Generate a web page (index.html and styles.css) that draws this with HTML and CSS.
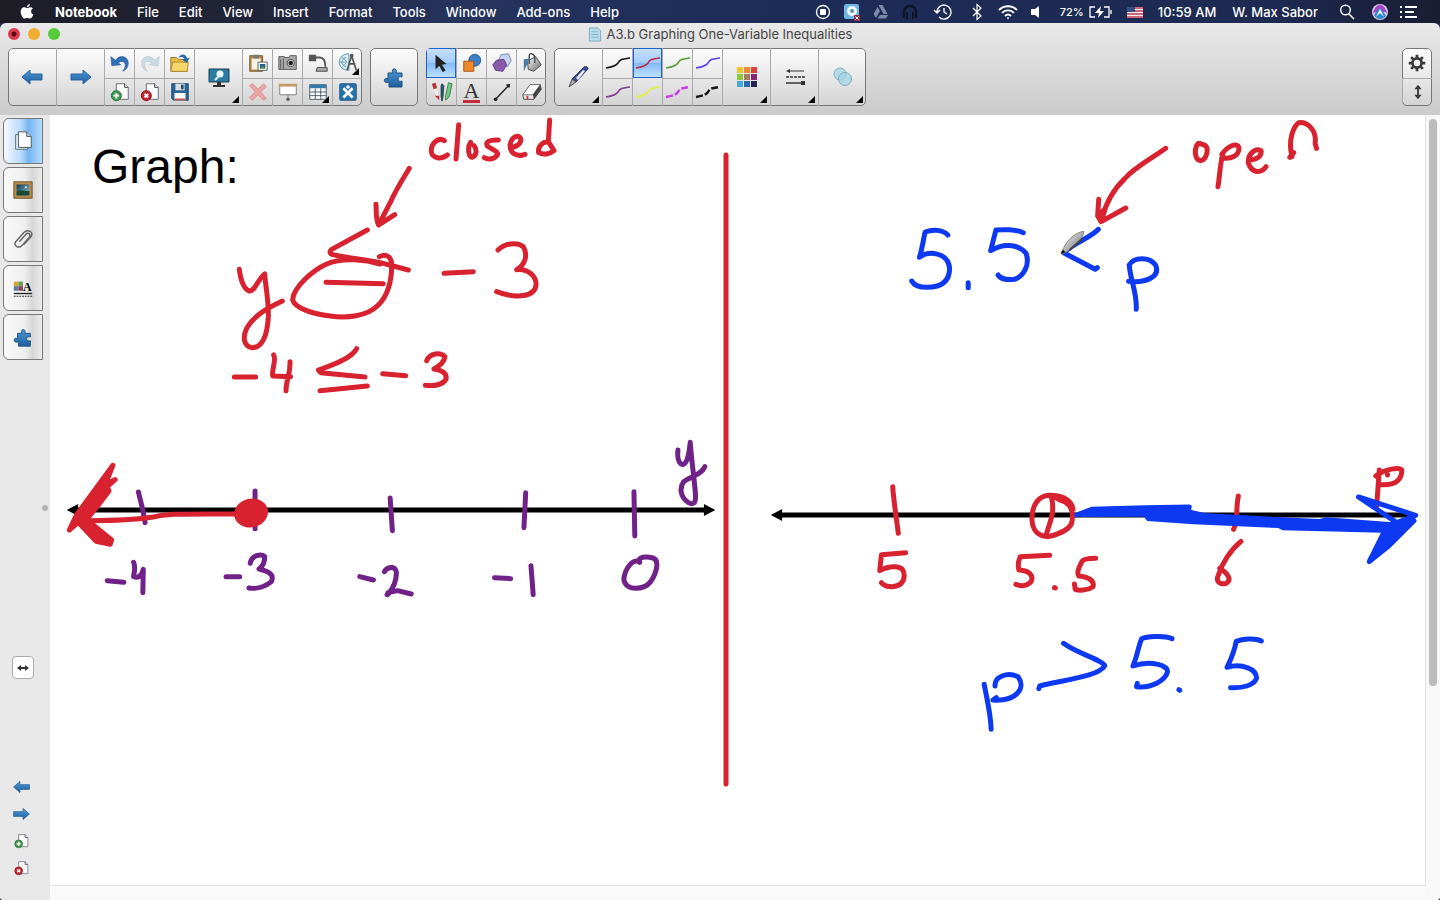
FILE: index.html
```html
<!DOCTYPE html>
<html lang="en">
<head>
<meta charset="utf-8">
<title>A3.b Graphing One-Variable Inequalities</title>
<link rel="stylesheet" href="styles.css">
</head>
<body>
<svg class="defs" aria-hidden="true">
  <defs>
    <linearGradient id="blue" x1="0" y1="0" x2="0" y2="1"><stop offset="0" stop-color="#4d9bd8"/><stop offset="1" stop-color="#1f5d9c"/></linearGradient>
    <linearGradient id="steel" x1="0" y1="0" x2="1" y2="1"><stop offset="0" stop-color="#fff"/><stop offset="1" stop-color="#666"/></linearGradient>
    <linearGradient id="sky" x1="0" y1="0" x2="1" y2="1"><stop offset="0" stop-color="#12384e"/><stop offset="1" stop-color="#8cc3dc"/></linearGradient>
    <symbol id="left" viewBox="0 0 24 20"><path d="M2 10 10 3v4h12v6H10v4z" fill="url(#blue)" stroke="#2b679f"/></symbol>
    <symbol id="right" viewBox="0 0 24 20"><path d="M22 10 14 3v4H2v6h12v4z" fill="url(#blue)" stroke="#2b679f"/></symbol>
    <symbol id="puzzle" viewBox="0 0 24 24"><path d="M6 8h5c-3-5 5-6 3 0h6v4c-2-1-4 0-4 2s2 3 4 2v6H7v-5c-6 3-6-6-1-3z" fill="url(#blue)" stroke="#204f80"/></symbol>
    <symbol id="page-add" viewBox="0 0 24 24"><path d="M8 3h9l4 4v13H8z" fill="#fafafa" stroke="#667"/><path d="M17 3v4h4" fill="#ddd" stroke="#445"/><circle cx="8" cy="16" r="5.500" fill="#3f994b" stroke="#276e35"/><path d="M8 13v6M5 16h6" stroke="#fff" stroke-width="2"/></symbol>
    <symbol id="page-del" viewBox="0 0 24 24"><path d="M8 3h9l4 4v13H8z" fill="#fafafa" stroke="#667"/><path d="M17 3v4h4" fill="#ddd" stroke="#445"/><circle cx="8" cy="16" r="5.500" fill="#c2242c" stroke="#851820"/><path d="m6 14 4 4m0-4-4 4" stroke="#fff" stroke-width="2"/></symbol>
    <symbol id="curve" viewBox="0 0 26 20"><path d="M1 15c6-1 10-2 12-5 2-4 5-4 12-5" fill="none" stroke="currentColor" stroke-width="1.600"/></symbol>
    <symbol id="curve-dash" viewBox="0 0 26 20"><path d="M1 15c6-1 10-2 12-5 2-4 5-4 12-5" fill="none" stroke="currentColor" stroke-width="2.400" stroke-dasharray="7 2"/></symbol>
  </defs>
</svg>

<header class="menubar">
  <nav class="menus" aria-label="Application menu">
    <button class="apple" aria-label="Apple menu"><svg viewBox="0 0 16 18"><path d="M11 1c0 2-1.500 3.500-3.200 3.500C7.700 2.800 9 1.300 11 1zM8.200 5.300c.8 0 1.800-.9 3.300-.9 1 0 2 .5 2.700 1.500-2.800 1.700-2.200 5.200.5 6.300-.8 2.200-2 4.300-3.500 4.300-1.100 0-1.500-.7-2.800-.7s-1.800.7-2.800.7c-2 0-4.300-4-4.300-7.200C1.300 6.300 3 4.500 5 4.500c1.400 0 2.400.8 3.200.8z" fill="#fff"/></svg></button>
    <button class="app">Notebook</button><button>File</button><button>Edit</button><button>View</button><button>Insert</button><button>Format</button><button>Tools</button><button>Window</button><button>Add-ons</button><button>Help</button>
  </nav>
  <div class="status">
    <svg viewBox="0 0 18 18"><circle cx="9" cy="9" r="6.500" fill="none" stroke="#fff" stroke-width="1.300"/><rect x="6" y="6" width="6" height="6" rx="1" fill="#fff"/></svg>
    <svg viewBox="0 0 18 18"><rect x="1" y="1" width="15" height="15" rx="2" fill="#72b7e2"/><circle cx="9" cy="8" r="5" fill="#eef8ff"/><circle cx="9" cy="8" r="2" fill="#5a91b8"/><rect x="11" y="12" width="6" height="6" fill="#96304c"/><path d="m12.500 13.500 3 3m0-3-3 3" stroke="#fff"/></svg>
    <svg viewBox="0 0 18 18"><path d="M6.500 2h4l5 9h-4zM5.500 4 8 8l-4 7-2.500-4zM8 12h8l-2 3.500H5.500z" fill="#7e88a7"/></svg>
    <svg viewBox="0 0 18 18"><path d="M3 15V9C3 1 15 1 15 9v6" fill="none" stroke="#101525" stroke-width="2.500"/><path d="M5 9h2v7H5zM11 9h2v7h-2z" fill="#101525"/></svg>
    <svg class="clock" viewBox="0 0 20 18"><path d="M4 9a7 7 0 1 1 2 5M1 7l3 3 3-3M11 5v4l3 2" fill="none" stroke="#fff" stroke-width="1.400"/></svg>
    <svg class="bt" viewBox="0 0 18 18"><path d="m5 5 8 8-4 3.500v-15L13 5l-8 8" fill="none" stroke="#fff" stroke-width="1.200"/></svg>
    <svg class="wifi" viewBox="0 0 20 18"><path d="M1 7c5-5 13-5 18 0M4 10c3-3.500 9-3.500 12 0M7 13c2-2 4-2 6 0" fill="none" stroke="#fff" stroke-width="1.900"/><path d="m8.500 14.500 1.500 2 1.500-2z" fill="#fff"/></svg>
    <svg class="vol" viewBox="0 0 18 18"><path d="M4 6h4l4-3v12l-4-3H4z" fill="#fff"/></svg>
    <span class="pct">72%</span>
    <svg class="batt" viewBox="0 0 25 18"><path d="M7 4H2v10h5M16 4h5v10h-5M23 7v4" fill="none" stroke="#fff" stroke-width="1.300"/><path d="M13 3 7 10h4l-1 5 6-7h-4z" fill="#fff"/></svg>
    <svg class="flag" viewBox="0 0 18 18"><path fill="#eee" d="M1 4h16v11H1z"/><path d="M1 5h16M1 8h16M1 11h16M1 14h16" stroke="#c23b52" stroke-width="1.500"/><path fill="#394f85" d="M1 4h8v5H1z"/></svg>
    <span class="time">10:59 AM</span><span class="user">W. Max Sabor</span>
    <svg class="search" viewBox="0 0 18 18"><circle cx="7.500" cy="7" r="4.800" fill="none" stroke="#fff" stroke-width="1.400"/><path d="m11 11 5 5" stroke="#fff" stroke-width="1.500"/></svg>
    <svg class="siri" viewBox="0 0 18 18"><circle cx="9" cy="9" r="8" fill="#d8c8ef"/><path d="M2 10c3-11 11-11 14 0-4-2-9-2-14 0z" fill="#a945c5"/><path d="M3 12c3-4 4-6 6-7 2 1 3 4 6 8-4 4-9 4-12-1z" fill="#2a8ac9"/><path d="m5 14 4-8 4 8-4-4z" fill="#f3fbff"/></svg>
    <svg class="list" viewBox="0 0 18 18"><path d="M0 4h2M5 4h12M0 9h2M5 9h9M0 14h2M5 14h12" stroke="#fff" stroke-width="2"/></svg>
  </div>
</header>

<div class="window">
  <div class="titlebar">
    <div class="lights"><button class="close" aria-label="Close"></button><button class="min" aria-label="Minimize"></button><button class="max" aria-label="Zoom"></button></div>
    <h1><svg viewBox="0 0 14 16"><path d="M1 1h9l3 3v11H1z" fill="#b9dcec" stroke="#7fa8bd"/><path d="M3 5h7M3 8h8M3 11h8" stroke="#7fb4cf"/></svg>A3.b Graphing One-Variable Inequalities</h1>
    <div></div>
  </div>

  <div class="toolbar" role="toolbar" aria-label="Tools">
    <div class="group">
      <button class="big" aria-label="Previous page"><svg><use href="#left"/></svg></button>
      <button class="big" aria-label="Next page"><svg><use href="#right"/></svg></button>
      <button aria-label="Undo"><svg viewBox="0 0 24 24"><path d="M7 9c5-7 14-4 14 3 0 5-3 8-6 9 3-4 4-8 1-10-2-1.500-4-.5-6 1l3 2-10 1-1-10z" fill="#2f70b7" stroke="#20558f" stroke-width=".6"/></svg></button>
      <button aria-label="Add page"><svg><use href="#page-add"/></svg></button>
      <button aria-label="Redo"><svg viewBox="0 0 24 24"><path d="M17 9C12 2 3 5 3 12c0 5 3 8 6 9-3-4-4-8-1-10 2-1.500 4-.5 6 1l-3 2 10 1 1-10z" fill="#ccdae2" stroke="#aebfc9" stroke-width=".6"/></svg></button>
      <button aria-label="Delete page"><svg><use href="#page-del"/></svg></button>
      <button aria-label="Open"><svg viewBox="0 0 24 24"><path d="M2 6h6l2 2h10v13H2z" fill="#e9bd42" stroke="#94702a"/><path d="m2 21 2-10h17l-1 10z" fill="#f5d66b" stroke="#aa8331"/><path d="M10 6c4-5 8-4 10 1l3-1-4 6-5-4h3c-1-3-3-3-7-2z" fill="#296ba8"/></svg></button>
      <button aria-label="Save"><svg viewBox="0 0 24 24"><path d="M3 3h18v18H5l-2-2z" fill="#28669a" stroke="#1b4668"/><path d="M7 3h10v7H7z" fill="#ddd"/><path d="M13 4h3v5h-3z" fill="#245070"/><path d="M6 13h12v8H6z" fill="#fff"/><path d="M6 19h12v2H6z" fill="#c75249"/></svg></button>
      <button class="big more" aria-label="View screens"><svg viewBox="0 0 24 24"><path d="M2 4h20v13H2z" fill="#2b7ba5" stroke="#1d4053"/><path d="M10 17h4v3h4v2H6v-2h4z" fill="#333"/><circle cx="13" cy="9" r="3.500" fill="#e9f8ff"/><path d="m11 12-3 3" stroke="#fff" stroke-width="2"/></svg></button>
      <button aria-label="Paste"><svg viewBox="0 0 24 24"><path d="M3 4h14v17H3z" fill="#b98744" stroke="#6d542f"/><path d="M5 7h10v12H5z" fill="#f5f2e8"/><path d="M7 3h6v4H7z" fill="#777"/><path d="M12 11h10v9H12z" fill="#fff" stroke="#555"/><path d="M14 13h6v5h-6z" fill="#27618b"/><path d="m14 18 3-3 3 3z" fill="#549249"/></svg></button>
      <button aria-label="Delete"><svg viewBox="0 0 24 24"><path d="m3 5 3-2 6 6 6-6 3 3-6 6 6 7-3 2-6-6-6 6-3-3 6-6z" fill="#e8a6a6" stroke="#dc8e90"/></svg></button>
      <button aria-label="Screen capture"><svg viewBox="0 0 24 24"><path d="M2 5h6v1h5l1-2h7v15H2z" fill="#aaa" stroke="#555"/><path d="M4 8v10M7 7v12" stroke="#555"/><circle cx="15" cy="12" r="4" fill="#ddd" stroke="#444"/><circle cx="15" cy="12" r="2.500" fill="#222"/></svg></button>
      <button aria-label="Screen shade"><svg viewBox="0 0 24 24"><path d="M3 5h18v10H3z" fill="#fff" stroke="#777"/><path d="M2 3h20v3H2z" fill="#c49a68"/><path d="M12 15v4" stroke="#777"/><circle cx="12" cy="20" r="2" fill="#666"/></svg></button>
      <button aria-label="Document camera"><svg viewBox="0 0 24 24"><path d="M2 3h8v7H2z" fill="#555"/><path d="M9 6h5c4 0 6 4 6 10" fill="none" stroke="#555" stroke-width="2"/><path d="M11 17h11v4H10z" fill="#aaa" stroke="#444"/></svg></button>
      <button class="more" aria-label="Table"><svg viewBox="0 0 24 24"><path d="M3 4h18v16H3z" fill="#fff" stroke="#465565"/><path d="M3 4h18v4H3z" fill="#357cad"/><path d="M3 12h18M3 16h18M9 8v12M15 8v12" stroke="#465565"/></svg></button>
      <button class="more" aria-label="Measurement tools"><svg viewBox="0 0 24 24"><path d="M13 2C-1 2-1 20 13 20zM10 6C4 7 4 15 10 16" fill="#d9edf3" stroke="#558b9d"/><path d="M2 11h8M5 5l6 6M5 17l6-6" stroke="#6c9cab"/><path d="m16 4-5 16M16 4l5 16M13 13h7" fill="none" stroke="#555" stroke-width="1.800"/><circle cx="16" cy="4" r="2" fill="#555"/></svg></button>
      <button aria-label="Activity builder"><svg viewBox="0 0 24 24"><rect x="3" y="3" width="18" height="18" rx="1" fill="#2472ae" stroke="#1f5783"/><path d="m7 8 10 10m0-10L7 18" stroke="#fff" stroke-width="3"/><circle cx="12" cy="6.500" r="2" fill="#fff"/></svg></button>
    </div>
    <div class="group">
      <button class="big" aria-label="Add-ons"><svg><use href="#puzzle"/></svg></button>
    </div>
    <div class="group">
      <button class="on" aria-label="Select" aria-pressed="true"><svg viewBox="0 0 24 24"><path d="m6 3 12 10-5 1 4 6-3 2-4-7-4 4z" fill="#222"/></svg></button>
      <button aria-label="Pens"><svg viewBox="0 0 24 24"><path d="m1 3 4-1 4 14v5l-4-4z" fill="#b6333c"/><path d="m2 9 5-1 2 8H5z" fill="#eee"/><path d="m12 3 2 2-1 13-1 4-1-5V5z" fill="#245b78" stroke="#254050"/><path d="m19 2 4 1-3 14-4 4v-5z" fill="#7bc488" stroke="#2b8740"/></svg></button>
      <button aria-label="Shapes"><svg viewBox="0 0 24 24"><circle cx="15" cy="9" r="6.500" fill="#3d7fc2" stroke="#28598e"/><path d="M3 10h11v11H3z" fill="#ee892c" stroke="#a75214"/></svg></button>
      <button class="text-tool" aria-label="Text"><span>A</span></button>
      <button aria-label="Regular polygons"><svg viewBox="0 0 24 24"><path d="m11 3 8-1 3 7-4 7-8-1-2-6z" fill="#c8d5f4" stroke="#717eb3"/><path d="m6 9 8-1 3 6-4 7-8-1-3-6z" fill="#8a5bad" stroke="#593978"/></svg></button>
      <button aria-label="Line"><svg viewBox="0 0 24 24"><path d="M5 20 20 4" stroke="#222" stroke-width="1.500"/><path d="m16 4 5-1-1 5z" fill="#222"/><circle cx="5" cy="20" r="2" fill="#222"/></svg></button>
      <button aria-label="Fill"><svg viewBox="0 0 24 24"><path d="m7 10 9-5 6 9-8 7-6-2z" fill="url(#steel)" stroke="#444"/><path d="M9 13V4c0-4 6-2 6 2v6" fill="none" stroke="#444" stroke-width="1.500"/><path d="m10 7-7 1v13l4-8z" fill="#4b7ea6"/></svg></button>
      <button aria-label="Eraser"><svg viewBox="0 0 24 24"><path d="M10 4h11l1 5-8 11H3l-1-5z" fill="#e8e8e8" stroke="#444"/><path d="m2 15 8-11h11l-8 11z" fill="#fff" stroke="#777"/><path d="m13 15 1 5 8-11-1-5z" fill="#444"/><path d="M6 16h2v4H6z" fill="#d12f42"/></svg></button>
    </div>
    <div class="group">
      <button class="big more" aria-label="Pen type"><svg viewBox="0 0 24 24"><path d="M18 2c2-1 4 0 4 2L10 17l-4-3z" fill="#394c97" stroke="#333d6a"/><path d="m17 5 2 1-7 9-2-2z" fill="#eee"/><path d="m6 14 4 3-7 5z" fill="#aaa" stroke="#555"/></svg></button>
      <button class="ink-black" aria-label="Black pen"><svg class="wide"><use href="#curve"/></svg></button>
      <button class="ink-violet" aria-label="Purple pen"><svg class="wide"><use href="#curve"/></svg></button>
      <button class="on ink-red" aria-label="Red pen" aria-pressed="true"><svg class="wide"><use href="#curve"/></svg></button>
      <button class="ink-yellow" aria-label="Yellow highlighter"><svg class="wide"><use href="#curve"/></svg></button>
      <button class="ink-green" aria-label="Green pen"><svg class="wide"><use href="#curve"/></svg></button>
      <button class="ink-pink" aria-label="Magenta dashed pen"><svg class="wide"><use href="#curve-dash"/></svg></button>
      <button class="ink-blue" aria-label="Blue pen"><svg class="wide"><use href="#curve"/></svg></button>
      <button class="ink-black" aria-label="Black dashed pen"><svg class="wide"><use href="#curve-dash"/></svg></button>
      <button class="big more" aria-label="Color"><svg viewBox="0 0 24 24"><path fill="#efc433" d="M2 2h6v6H2z"/><path fill="#ec8b2f" d="M9 2h6v6H9z"/><path fill="#dc4233" d="M16 2h6v6h-6z"/><path fill="#8cc83d" d="M2 9h6v6H2z"/><path fill="#a97960" d="M9 9h6v6H9z"/><path fill="#862676" d="M16 9h6v6h-6z"/><path fill="#49a9df" d="M2 16h6v6H2z"/><path fill="#2d67ac" d="M9 16h6v6H9z"/><path fill="#24245b" d="M16 16h6v6h-6z"/></svg></button>
      <button class="big more" aria-label="Line style"><svg viewBox="0 0 24 24"><path d="M5 6h16" stroke="#333"/><path d="M3 6l4-2v4zM18 16h4v4h-4z" fill="#333"/><path d="M3 12h19" stroke="#333" stroke-width="1.500" stroke-dasharray="3 1"/><path d="M3 18h18" stroke="#333" stroke-width="1.500"/></svg></button>
      <button class="big more" aria-label="Transparency"><svg viewBox="0 0 24 24"><circle cx="9" cy="9" r="6" fill="#b5dbe8" stroke="#7eacbc"/><circle cx="14" cy="14" r="6.500" fill="#a3d4e5" fill-opacity=".75" stroke="#7eacbc"/></svg></button>
    </div>
    <div class="group end">
      <button aria-label="Customize toolbar"><svg viewBox="0 0 24 24"><circle cx="12" cy="12" r="5" fill="none" stroke="#3b3b3b" stroke-width="3"/><path d="M12 3v4M12 17v4M3 12h4M17 12h4M5.600 5.600l3 3M15.400 15.400l3 3M5.600 18.400l3-3M15.400 8.600l3-3" stroke="#3b3b3b" stroke-width="3"/></svg></button>
      <button aria-label="Move toolbar"><svg viewBox="0 0 24 24"><path d="m12 4 4 5h-3v6h3l-4 5-4-5h3V9H8z" fill="#3b3b3b"/></svg></button>
    </div>
  </div>

  <main class="workspace">
    <aside class="sidebar">
      <div class="tabs">
        <button class="active" aria-label="Page sorter"><svg viewBox="0 0 24 24"><path d="M4 5h10l3 3v13H4z" fill="#e4f1ff" stroke="#566"/><path d="M7 2h9l5 5v12H7z" fill="#fafdff" stroke="#455"/><path d="M16 2v5h5" fill="#ccd" stroke="#455"/></svg></button>
        <button aria-label="Gallery"><svg viewBox="0 0 24 24"><path d="M2 3h20v18H2z" fill="#b58a45" stroke="#70522c"/><path d="M5 6h14v12H5z" fill="url(#sky)"/><path d="M5 14c5-4 9 0 14-1v5H5z" fill="#1d4a36"/><circle cx="15" cy="9" r="1" fill="#fff"/></svg></button>
        <button aria-label="Attachments"><svg viewBox="0 0 24 24"><path d="m8 15 7-8c3-3 6 0 4 3l-8 9c-4 4-10 0-7-4l9-10c4-4 11-1 8 4l-8 9" fill="none" stroke="#666" stroke-width="1.600"/></svg></button>
        <button aria-label="Properties"><svg viewBox="0 0 24 24"><path fill="#d3a63c" d="M2 5h5v5H2z"/><path fill="#67a05a" d="M7 5h5v5H7z"/><path fill="#5b7d9c" d="M2 10h5v5H2z"/><path fill="#8b445e" d="M7 10h5v5H7z"/><path d="M2 18h20" stroke="#222" stroke-width="1.500"/><path d="M2 21h20" stroke="#222" stroke-dasharray="2 1"/><text x="12" y="15" class="icon-letter">A</text></svg></button>
        <button aria-label="Add-ons tab"><svg><use href="#puzzle"/></svg></button>
      </div>
      <div class="grip"></div>
      <button class="resize" aria-label="Move sidebar"><svg viewBox="0 0 16 16"><path d="m2 8 4-3v2h4V5l4 3-4 3V9H6v2z" fill="#333"/></svg></button>
      <div class="pager">
        <button aria-label="Back"><svg><use href="#left"/></svg></button>
        <button aria-label="Forward"><svg><use href="#right"/></svg></button>
        <button aria-label="New page"><svg><use href="#page-add"/></svg></button>
        <button aria-label="Remove page"><svg><use href="#page-del"/></svg></button>
      </div>
    </aside>
    <section class="canvas" aria-label="Notebook page">
      <svg class="board" viewBox="50 115 1375 770" preserveAspectRatio="xMinYMin meet">
        <text x="92" y="183" class="heading">Graph:</text>
        <path class="red divider" d="M726 155V784"/>
        <g class="red" transform="translate(50 110) scale(.33333)" role="img" aria-label="closed; y ≤ −3; −4 ≤ −3">
          <path d="M1183 92C1165 80 1142 100 1144 125 1146 145 1175 150 1192 135M1226 44 1218 147M1262 97C1252 110 1255 140 1266 142 1280 138 1282 118 1272 107M1345 90C1320 88 1305 95 1312 108 1325 118 1348 125 1342 135 1332 148 1315 150 1303 143M1382 112C1400 112 1415 100 1412 85 1405 72 1385 80 1380 105 1380 130 1400 142 1425 133M1499 30 1495 95 1512 122M1495 97C1480 92 1462 110 1466 128 1480 136 1500 132 1512 122"/>
          <path d="M1078 175C1060 205 1040 235 1022 275L986 345M978 283C980 310 976 325 986 345L1034 314"/>
          <path d="M952 360 845 418C838 425 838 430 848 434 900 445 960 450 1000 460L1075 480M988 440C1010 430 1025 440 1025 465 1025 520 1010 560 985 585 950 620 890 625 840 618 790 612 735 595 728 570 730 530 790 480 830 462 880 440 950 450 990 462M828 517 1000 521"/>
          <path d="M568 478C572 510 580 535 597 543 615 545 625 505 644 492 648 540 656 570 655 620 652 680 635 715 605 713 580 708 578 680 590 655 610 620 640 600 697 573M1182 490 1270 485M1344 420C1365 400 1400 395 1420 410 1435 435 1425 465 1400 479 1435 475 1460 500 1458 525 1455 560 1400 568 1340 545"/>
          <path d="M553 801H617M671 735C680 750 665 775 668 798L722 800M720 755C722 790 708 810 708 842M920 716C905 745 850 765 805 780L812 788 945 801M810 842 952 828M998 791 1067 797M1130 752C1140 730 1170 725 1185 740 1182 760 1165 770 1152 777 1175 780 1192 790 1188 808 1175 828 1150 828 1126 826"/>
        </g>
        <g transform="translate(50 430) scale(.44005 .33333)" role="img" aria-label="Number line y from −4 to 0, shaded left from −3">
          <path class="axis" d="M55 240H1492"/><path d="M38 240 64 222V258zM1512 240 1486 222V258z"/>
          <path class="purple" d="M201 186C206 215 213 245 216 278M466 183V296M773 204 778 302M1081 188 1077 293M1327 185 1329 318M1427 60C1425 85 1428 100 1438 104 1450 100 1453 60 1455 37 1458 100 1466 160 1467 200 1467 222 1460 225 1450 217 1432 200 1430 175 1440 155 1455 140 1480 135 1488 110M130 452 168 457M190 397C196 415 190 430 190 440 200 445 208 440 212 418L211 488M400 440H431M455 400C458 375 480 370 488 380 488 400 480 412 475 417 500 425 510 435 503 455 490 470 470 478 452 474M704 440 735 450M760 425C765 412 785 405 787 425 788 455 780 475 768 493M768 488 790 482 821 492M766 494 770 490M1010 443 1047 446M1093 407 1098 494M1340 397C1325 380 1305 420 1304 450 1310 485 1350 480 1365 455 1380 425 1385 390 1370 384 1355 378 1335 380 1340 395"/>
          <path class="red" d="M90 272C160 272 200 268 230 262 270 250 290 252 430 252"/>
          <ellipse class="redfill" cx="457" cy="249" rx="38" ry="44" transform="rotate(15 457 249)"/>
          <path class="redfill red" d="M143 106 60 255 44 300 64 277 105 334 137 343 140 330 92 278 87 262 110 225 134 183 130 170 148 149 126 162z"/>
        </g>
        <g transform="translate(760 450) scale(.43367 .33333)" role="img" aria-label="Number line p from 5 to 6, shaded right from 5.5; p &gt; 5.5">
          <path class="axis" d="M45 195H1490"/><path d="M25 195 51 177V213zM1512 195 1486 180V210z"/>
          <path class="red" d="M306 110C308 150 314 200 319 250M1103 138C1097 175 1102 215 1092 238M722 178C718 150 697 135 666 136 640 138 627 170 627 205 627 245 645 260 665 260 690 252 710 242 718 222 725 190 718 160 695 152L680 142M672 142C682 190 665 225 660 255M336 308 280 314 276 362C300 345 330 345 332 370 335 400 320 408 305 410 290 410 284 405 280 398M668 316 600 320C595 335 595 350 597 360 620 362 632 375 625 395 615 410 600 408 590 403M679 413 681 414M774 325C755 325 745 328 742 335 735 355 730 365 735 378 755 380 772 390 768 410 755 422 735 422 727 418L725 402M1109 274C1085 300 1065 340 1057 375 1050 395 1060 405 1075 400 1088 390 1080 370 1060 355M1428 60 1422 170M1420 78C1440 57 1475 50 1480 60 1480 85 1470 108 1430 104M1447 73V75"/>
          <path class="blue" d="M730 195 765 178 890 173 990 171M1465 215 1380 141 1512 196 1460 222M1508 212 1448 290 1405 335 1440 243"/>
          <path class="bluefill" d="M728 190 765 172 990 165 995 180 1025 189 1200 202 1290 207 1305 202 1450 216 1508 208 1448 290 1400 332 1435 248 1205 241 1195 234 1000 223 893 213 885 200 740 201z"/>
          <path class="blue" d="M517 703C522 740 532 790 533 838M542 708C540 680 570 665 595 680 615 715 590 755 537 750L545 743M700 580C730 610 790 630 795 647 780 680 700 690 645 708L643 716M950 566C930 555 890 560 880 566 872 590 870 620 860 648 900 630 940 645 940 665 935 690 905 715 868 710L870 700M966 719 968 721M1156 573C1140 562 1110 568 1098 574 1095 600 1085 630 1077 652 1110 640 1145 655 1145 685 1140 705 1115 715 1085 713"/>
        </g>
        <g transform="translate(890 110) scale(.35077 .33333)" role="img" aria-label="open; 5.5 &lt; p">
          <path class="red" d="M786 115C740 150 700 170 670 205 635 240 615 280 605 325M595 268 592 318 602 335 672 294M592 318 610 300M878 101C867 115 867 148 885 152 903 150 910 115 898 106 890 103 884 99 878 101M948 135C940 170 940 200 935 230M946 133C965 105 990 97 995 113 995 140 970 147 950 144M1022 150C1045 150 1060 140 1058 122 1040 112 1018 135 1022 160 1030 185 1055 195 1072 170M1146 140C1134 90 1150 50 1165 38 1190 35 1217 60 1212 100L1216 115M1140 142 1151 128"/>
          <path class="blue" d="M165 375C150 358 120 358 100 366 95 390 92 415 84 442 110 422 165 425 170 475 170 520 140 532 105 532 80 532 68 525 62 513M223 518V533M380 368C360 358 320 358 302 360L287 422C320 400 365 400 388 430 400 465 380 500 355 508 335 510 318 510 308 495M594 358C570 385 530 395 495 428L585 478 591 473M682 465C685 510 705 550 702 598M682 465C695 440 740 440 757 465 772 500 730 520 680 514"/>
          <path d="M489 431C498 395 525 368 552 364 555 380 530 405 500 428z" fill="url(#steel)" stroke="#888" stroke-width="1"/><path d="m487 432 6-13 7 8z"/><path d="m512 420 36-34" stroke="#444" stroke-width="2"/>
        </g>
      </svg>
    </section>
    <div class="scroll"><div class="thumb"></div></div>
  </main>
</div>
</body>
</html>
```
FILE: styles.css
```css
* { box-sizing: border-box; }
body {
  margin: 0;
  height: 100vh;
  display: flex;
  flex-direction: column;
  overflow: hidden;
  background: #1d2748;
  font-family: Inter, "Liberation Sans", sans-serif;
}
button {
  margin: 0;
  padding: 0;
  border: 0;
  background: none;
  color: inherit;
  font: inherit;
}
.defs { position: absolute; width: 0; height: 0; }

.menubar {
  flex: none;
  height: 23px;
  display: flex;
  justify-content: space-between;
  align-items: center;
  padding: 0 22px 0 19px;
  color: #fff;
  font-size: 13px;
  font-weight: 500;
  white-space: nowrap;
  background: linear-gradient(90deg, #1e1d26, #22253a 18%, #26345e 32%, #1d2c58 50%, #1d2a52 88%, #1a1d33);
}
.menus, .status { display: flex; align-items: center; }
.menus { gap: 20px; }
.apple svg { display: block; width: 16px; height: 17px; }
.app { font-weight: 700; }
.status svg { width: 18px; height: 18px; margin-right: 11px; }
.status .clock { width: 20px; margin: 0 15px 0 3px; }
.status .bt { margin-right: 12px; }
.status .wifi { width: 20px; margin-right: 9px; }
.status .vol { margin-right: 15px; }
.pct { font-size: 11px; margin-right: 4px; }
.status .batt { width: 25px; margin-right: 13px; }
.status .flag { margin-right: 14px; }
.time { margin-right: 16px; }
.user { margin-right: 20px; }
.status .search { margin-right: 15px; }
.status .siri { margin-right: 11px; }
.status .list { margin-right: 0; }

.window {
  flex: 1;
  min-height: 0;
  display: flex;
  flex-direction: column;
  border-radius: 6px 6px 4px 4px;
  overflow: hidden;
  background: linear-gradient(#e9e9e9, #cbcbcb 92px);
}
.titlebar {
  flex: none;
  height: 22px;
  display: grid;
  grid-template-columns: 1fr auto 1fr;
  align-items: center;
  padding: 0 8px;
}
.lights { display: flex; gap: 8px; }
.lights button { width: 12px; height: 12px; border-radius: 50%; }
.close { background: radial-gradient(circle, #5a0712 0 2px, #df3b50 3px); }
.min { background: #f0ad32; }
.max { background: #55cb3b; }
h1 {
  display: flex;
  align-items: center;
  gap: 5px;
  margin: 0;
  color: #444;
  font-size: 13px;
  font-weight: 400;
  line-height: 20px;
}
h1 svg { width: 14px; height: 15px; }

.toolbar {
  flex: none;
  display: flex;
  gap: 8px;
  padding: 3px 8px 9px;
}
.group {
  display: grid;
  grid-template-rows: 30px 28px;
  grid-auto-flow: column;
  overflow: hidden;
  border-radius: 5px;
  outline: 1px solid #777;
  outline-offset: -1px;
  background: linear-gradient(#fdfdfd, #d3d3d3);
}
.group.end { margin-left: auto; }
.group button {
  position: relative;
  width: 30px;
  display: grid;
  place-items: center;
  border-left: 1px solid #aaa;
}
.group button:first-child { border-left: 0; }
.group button:not(.big) { box-shadow: 0 1px #aaa; }
.group svg { width: 22px; height: 22px; }
.group .big { grid-row: span 2; width: 48px; }
.group .big svg { width: 24px; height: 24px; }
.group .wide { width: 26px; height: 20px; }
.group button.on {
  background: linear-gradient(#c9e1fb, #a3cdf9 48%, #7fb9f7 50%, #c4e4ff);
  box-shadow: inset 0 0 0 1px #1d62ce;
}
.more::after {
  content: "";
  position: absolute;
  right: 3px;
  bottom: 3px;
  width: 7px;
  height: 7px;
  background: #000;
  clip-path: polygon(100% 0, 100% 100%, 0 100%);
}
.text-tool span {
  border-bottom: 3px solid #c12c38;
  padding: 0 1px;
  color: #333;
  font: 22px/18px "Liberation Serif", serif;
}
.ink-black { color: #161616; }
.ink-violet { color: #803b8e; }
.ink-red { color: #b92c48; }
.ink-yellow { color: #e6ee3c; }
.ink-green { color: #57a034; }
.ink-pink { color: #cc38ea; }
.ink-blue { color: #5541ee; }

.workspace {
  flex: 1;
  min-height: 0;
  display: flex;
  background: #fafafa;
}
.sidebar {
  flex: none;
  width: 50px;
  display: flex;
  flex-direction: column;
  padding: 3px 3px 22px;
  background: #e8e8e8;
}
.tabs { display: grid; gap: 3px; width: 40px; }
.tabs button {
  height: 46px;
  display: grid;
  place-items: center;
  border: 1px solid #777;
  border-radius: 6px 0 0 6px;
  background: linear-gradient(90deg, #fafafa, #eee 55%, #d6d6d6 75%, #ececec);
}
.tabs .active { background: linear-gradient(90deg, #f5faff, #b8d9fb 45%, #76b4f3 65%, #b4dcff); }
.tabs svg { width: 22px; height: 22px; }
.icon-letter { font: 700 13px "Liberation Serif", serif; }
.grip {
  width: 6px;
  height: 6px;
  margin: 145px 0 0 39px;
  border-radius: 50%;
  background: #b5b5b5;
}
.resize {
  width: 22px;
  height: 23px;
  display: grid;
  place-items: center;
  margin: 145px 0 auto 9px;
  border: 1px solid #aaa;
  border-radius: 4px;
  background: #fff;
}
.resize svg { width: 16px; height: 16px; }
.pager { display: grid; gap: 7px; width: 36px; justify-items: center; }
.pager button { height: 20px; }
.pager svg { display: block; width: 19px; height: 20px; }
.pager button:nth-child(n+3) svg { width: 17px; }
.canvas {
  flex: 1;
  min-width: 0;
  margin-bottom: 14px;
  border: solid #e2e2e2;
  border-width: 0 1px 1px 0;
  background: #fff;
}
.board { display: block; width: 100%; height: 100%; }
.heading { font: 48px "Liberation Sans", sans-serif; }
.board path { vector-effect: non-scaling-stroke; }
.red, .purple, .blue, .axis {
  fill: none;
  stroke-width: 5px;
  stroke-linecap: round;
  stroke-linejoin: round;
}
.red { stroke: #d8222f; }
.purple { stroke: #702288; }
.blue { stroke: #0d39f2; }
.axis { stroke: #000; stroke-linecap: butt; }
.redfill { fill: #d8222f; }
.bluefill { fill: #0d39f2; }
.scroll { flex: none; width: 14px; padding: 4px 3px; background: #f8f8f8; }
.thumb { width: 8px; height: 73%; border-radius: 4px; background: #bcbcbc; }
```
